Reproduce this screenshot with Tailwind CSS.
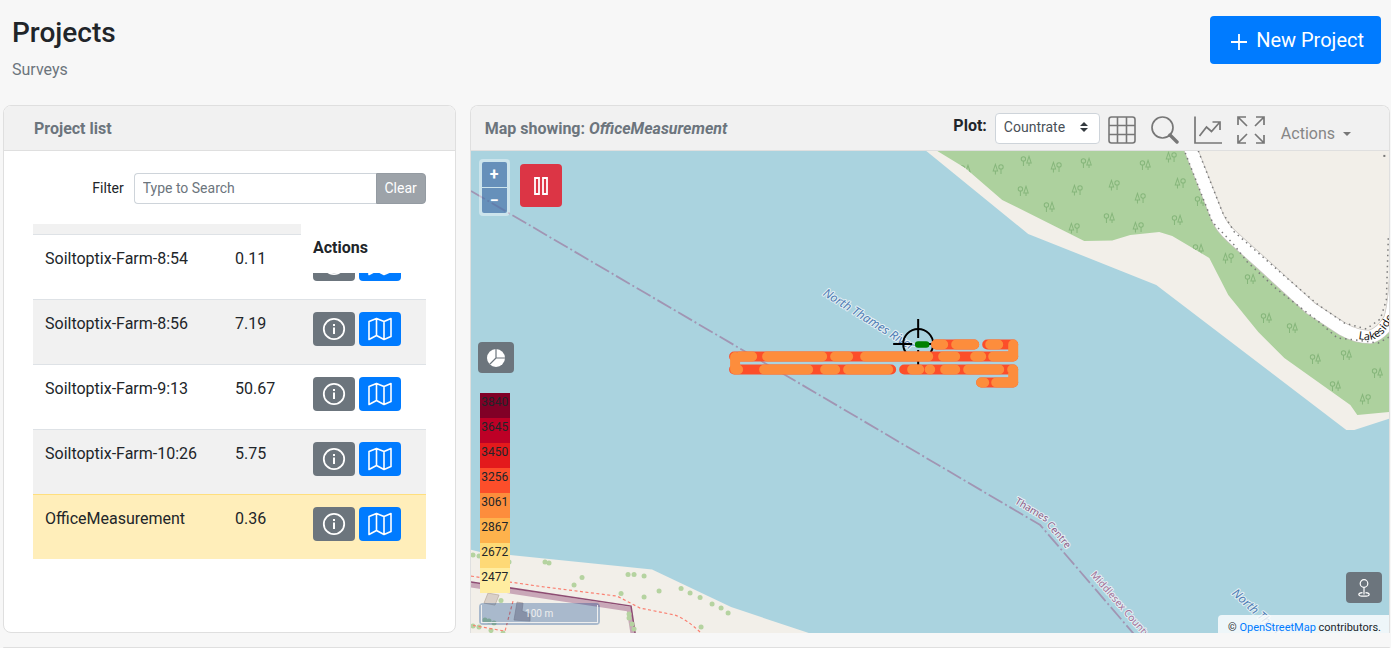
<!DOCTYPE html>
<html lang="en">
  <head>
    <meta charset="UTF-8" />
    <meta name="viewport" content="width=device-width, initial-scale=1.0" />
    <title>Projects - Surveys</title>
    <script src="https://cdn.jsdelivr.net/npm/@tailwindcss/browser@4"></script>
  </head>
  <body class="flex h-screen flex-col overflow-hidden bg-[#f7f7f7] font-['Roboto',sans-serif] text-base text-[#212529]">
    <!-- Shared icons -->
    <svg class="hidden">
      <symbol id="icon-info" viewBox="0 0 24 24">
        <circle cx="12" cy="12" r="10.2" fill="none" stroke="#fff" stroke-width="1.8" />
        <path d="M11 10.5h2V17h-2zM11 7h2v2h-2z" fill="#fff" />
      </symbol>
      <symbol id="icon-map" viewBox="0 0 24 24">
        <path d="M1 4.5 8.5 1.5 16 4.5 23 1.5V19.5L16 22.5 8.5 18.5 1 22.5zM8.5 1.5v17M16 4.5v18" fill="none" stroke="#fff" stroke-width="1.6" stroke-linejoin="round" />
      </symbol>
      <symbol id="tree-a" viewBox="-6 -6 12 12" overflow="visible">
        <path d="M-2.8-4.5-5 2h4.4zM-2.8 2v3.5M2.8 0v5" />
        <circle cx="2.8" cy="-2" r="2.2" />
      </symbol>
      <symbol id="tree-b" viewBox="-6 -6 12 12" overflow="visible">
        <path d="M2.8-4.5.6 2H5zM2.8 2v3M-2.8 0v5" />
        <circle cx="-2.8" cy="-2" r="2.2" />
      </symbol>
    </svg>

    <header class="flex items-start justify-between pt-4 pr-2.5 pl-3">
      <div>
        <h1 class="text-[28px] leading-[34px] font-medium">Projects</h1>
        <p class="mt-2 leading-6 text-[#6c757d]">Surveys</p>
      </div>
      <button class="flex h-12 items-center gap-1.5 rounded bg-[#007bff] pr-[17px] pl-4 text-xl text-white">
        <svg class="mt-1 size-6" viewBox="0 0 24 24" fill="none" stroke="currentColor" stroke-width="1.8">
          <path d="M13 4v16M5 12h16" />
        </svg>
        New Project
      </button>
    </header>

    <main class="mt-[23px] grid grid-cols-3">
      <!-- Project list -->
      <section class="pr-2 pl-[3px]">
        <div class="h-full overflow-hidden rounded-lg border border-[#dfdfdf] bg-white">
          <div class="flex h-[45px] items-center border-b border-[#dfdfdf] bg-[#f1f1f1] pt-0.5 pl-[30px]">
            <h2 class="font-bold text-[#6c757d]">Project list</h2>
          </div>
          <div class="px-[29px] pt-[22px]">
            <form class="flex items-center text-sm">
              <label for="filter" class="ml-auto pr-2.5 pb-0.5">Filter</label>
              <input id="filter" type="search" placeholder="Type to Search" class="h-[31px] w-[242px] rounded-l border border-r-0 border-[#ced4da] px-2 pb-0.5 placeholder:text-[#6c757d]" />
              <button type="button" disabled class="h-[31px] w-[50px] rounded-r border border-[#949ba2] bg-[#9da3a9] pb-0.5 text-center text-white">Clear</button>
            </form>

            <!-- column-reverse opens the list scrolled to its last row -->
            <div class="mt-5 flex h-[335px] flex-col-reverse overflow-y-auto [scrollbar-width:none]">
              <table class="w-full table-fixed border-separate border-spacing-0 text-left">
                <thead>
                  <tr class="h-[49px]">
                    <th class="w-[190px]"></th>
                    <th class="w-[78px]"></th>
                    <th class="sticky top-0 z-10 bg-white px-3 pt-3 pb-[13px] font-bold">Actions</th>
                  </tr>
                </thead>
                <tbody>
                  <tr class="h-[65px] bg-[#f1f1f1]">
                    <td></td>
                    <td></td>
                    <td></td>
                  </tr>
                  <tr class="h-[65px] align-top">
                    <td class="border-t border-[#dee2e6] px-3 pt-3">Soiltoptix-Farm-8:54</td>
                    <td class="border-t border-[#dee2e6] px-3 pt-3">0.11</td>
                    <td class="border-t border-[#dee2e6] px-3 pt-3">
                      <div class="flex gap-1">
                        <button aria-label="Info" class="flex h-[34px] w-[42px] items-center justify-center rounded bg-[#6c757d]"><svg class="size-6"><use href="#icon-info" /></svg></button>
                        <button aria-label="Show on map" class="flex h-[34px] w-[42px] items-center justify-center rounded bg-[#007bff]"><svg class="size-6"><use href="#icon-map" /></svg></button>
                      </div>
                    </td>
                  </tr>
                  <tr class="h-[65px] bg-[#f1f1f1] align-top">
                    <td class="border-t border-[#dee2e6] px-3 pt-3">Soiltoptix-Farm-8:56</td>
                    <td class="border-t border-[#dee2e6] px-3 pt-3">7.19</td>
                    <td class="border-t border-[#dee2e6] px-3 pt-3">
                      <div class="flex gap-1">
                        <button aria-label="Info" class="flex h-[34px] w-[42px] items-center justify-center rounded bg-[#6c757d]"><svg class="size-6"><use href="#icon-info" /></svg></button>
                        <button aria-label="Show on map" class="flex h-[34px] w-[42px] items-center justify-center rounded bg-[#007bff]"><svg class="size-6"><use href="#icon-map" /></svg></button>
                      </div>
                    </td>
                  </tr>
                  <tr class="h-[65px] align-top">
                    <td class="border-t border-[#dee2e6] px-3 pt-3">Soiltoptix-Farm-9:13</td>
                    <td class="border-t border-[#dee2e6] px-3 pt-3">50.67</td>
                    <td class="border-t border-[#dee2e6] px-3 pt-3">
                      <div class="flex gap-1">
                        <button aria-label="Info" class="flex h-[34px] w-[42px] items-center justify-center rounded bg-[#6c757d]"><svg class="size-6"><use href="#icon-info" /></svg></button>
                        <button aria-label="Show on map" class="flex h-[34px] w-[42px] items-center justify-center rounded bg-[#007bff]"><svg class="size-6"><use href="#icon-map" /></svg></button>
                      </div>
                    </td>
                  </tr>
                  <tr class="h-[65px] bg-[#f1f1f1] align-top">
                    <td class="border-t border-[#dee2e6] px-3 pt-3">Soiltoptix-Farm-10:26</td>
                    <td class="border-t border-[#dee2e6] px-3 pt-3">5.75</td>
                    <td class="border-t border-[#dee2e6] px-3 pt-3">
                      <div class="flex gap-1">
                        <button aria-label="Info" class="flex h-[34px] w-[42px] items-center justify-center rounded bg-[#6c757d]"><svg class="size-6"><use href="#icon-info" /></svg></button>
                        <button aria-label="Show on map" class="flex h-[34px] w-[42px] items-center justify-center rounded bg-[#007bff]"><svg class="size-6"><use href="#icon-map" /></svg></button>
                      </div>
                    </td>
                  </tr>
                  <!-- Selected project -->
                  <tr class="h-[65px] bg-[#ffeeba] align-top">
                    <td class="border-t border-[#ffdf7e] px-3 pt-3">OfficeMeasurement</td>
                    <td class="border-t border-[#ffdf7e] px-3 pt-3">0.36</td>
                    <td class="border-t border-[#ffdf7e] px-3 pt-3">
                      <div class="flex gap-1">
                        <button aria-label="Info" class="flex h-[34px] w-[42px] items-center justify-center rounded bg-[#6c757d]"><svg class="size-6"><use href="#icon-info" /></svg></button>
                        <button aria-label="Show on map" class="flex h-[34px] w-[42px] items-center justify-center rounded bg-[#007bff]"><svg class="size-6"><use href="#icon-map" /></svg></button>
                      </div>
                    </td>
                  </tr>
                </tbody>
              </table>
            </div>
          </div>
        </div>
      </section>

      <!-- Map -->
      <section class="col-span-2 pr-px pl-1.5">
        <div class="overflow-hidden rounded-t-lg border border-b-0 border-[#dfdfdf] bg-white">
          <div class="flex h-[45px] items-center justify-between border-b border-[#dfdfdf] bg-[#f1f1f1] pl-3.5">
            <h2 class="pt-0.5 font-bold text-[#6c757d]">Map showing: <em>OfficeMeasurement</em></h2>
            <div class="flex h-full items-end pr-[38px] pb-1.5 text-[#777]">
              <label for="plot" class="pr-2 leading-9 font-bold text-[#212529]">Plot:</label>
              <div class="relative mr-2">
                <select id="plot" class="block h-[31px] w-[105px] appearance-none rounded border border-[#ced4da] bg-white pb-1 pl-2 text-sm text-[#495057]">
                  <option>Countrate</option>
                </select>
                <svg class="pointer-events-none absolute top-[9px] right-3 h-2.5 w-2" viewBox="0 0 8 10" fill="#343a40">
                  <path d="M4 0 0 4h8zM4 10 0 6h8z" />
                </svg>
              </div>
              <div class="flex gap-[15px]">
                <button aria-label="Table">
                  <svg class="size-7" viewBox="0 0 28 28" fill="none" stroke="currentColor" stroke-width="1.6">
                    <rect x="1" y="1" width="26" height="26" rx="2.5" />
                    <path d="M1 9.5h26M1 18.5h26M9.5 1v26M18.5 1v26" />
                  </svg>
                </button>
                <button aria-label="Zoom to data">
                  <svg class="size-7" viewBox="0 0 28 28" fill="none" stroke="currentColor">
                    <circle cx="11.5" cy="11.5" r="10.5" stroke-width="1.7" />
                    <path d="m19 19 7 7" stroke-width="3.4" stroke-linecap="round" />
                  </svg>
                </button>
                <button aria-label="Chart">
                  <svg class="size-7" viewBox="0 0 28 28" fill="none" stroke="currentColor" stroke-width="1.7">
                    <path d="M1 .5V27h27M5.5 20l7-9 5 4.5L25.5 6.5M18.5 6H26v8" />
                  </svg>
                </button>
                <button aria-label="Full screen">
                  <svg class="size-7" viewBox="0 0 28 28" fill="none" stroke="currentColor" stroke-width="1.7">
                    <path d="M1 9V1h8M1 1l9 9M19 1h8v8M27 1l-9 9M1 19v8h8M1 27l9-9M27 19v8h-8M27 27l-9-9" />
                  </svg>
                </button>
              </div>
              <button class="ml-4 flex items-center leading-5 text-[#868686]">
                Actions
                <svg class="ml-2 h-1 w-2" viewBox="0 0 8 4" fill="#777"><path d="M0 0h8L4 4z" /></svg>
              </button>
            </div>
          </div>

          <div class="relative h-[482px]">
            <svg class="size-full" viewBox="471 151 918 482" preserveAspectRatio="xMidYMid slice">
              <defs>
                <clipPath id="wood">
                  <path d="M937 151 965 168 1002 200 1084 241 1112 240.5 1130 235 1159 232 1172 236 1209 258 1228 295 1258 332 1284 358 1350 405 1357 415 1400 411V151z" />
                </clipPath>
              </defs>
              <rect x="371" y="51" width="1200" height="700" fill="#aad3df" />

              <!-- north shore -->
              <path d="M926 151 1028 234 1156 285 1346 430H1354L1400 415V151z" fill="#f2efe9" />
              <g clip-path="url(#wood)">
                <rect x="930" y="151" width="470" height="270" fill="#add19e" />
                <g fill="none" stroke="#86b67b" stroke-width="1">
                  <use href="#tree-b" x="959" y="164" width="12" height="12" />
                  <use href="#tree-a" x="992" y="163" width="12" height="12" />
                  <use href="#tree-b" x="1020" y="155" width="12" height="12" />
                  <use href="#tree-a" x="1050" y="161" width="12" height="12" />
                  <use href="#tree-b" x="1080" y="157" width="12" height="12" />
                  <use href="#tree-b" x="1139" y="159" width="12" height="12" />
                  <use href="#tree-a" x="1165" y="151" width="12" height="12" />
                  <use href="#tree-b" x="1017" y="185" width="12" height="12" />
                  <use href="#tree-a" x="1071" y="184" width="12" height="12" />
                  <use href="#tree-a" x="1108" y="179" width="12" height="12" />
                  <use href="#tree-a" x="1134" y="192" width="12" height="12" />
                  <use href="#tree-a" x="1174" y="177" width="12" height="12" />
                  <use href="#tree-b" x="1043" y="201" width="12" height="12" />
                  <use href="#tree-a" x="1068" y="222" width="12" height="12" />
                  <use href="#tree-b" x="1103" y="212" width="12" height="12" />
                  <use href="#tree-a" x="1132" y="221" width="12" height="12" />
                  <use href="#tree-b" x="1171" y="214" width="12" height="12" />
                  <use href="#tree-b" x="1194" y="195" width="12" height="12" />
                  <use href="#tree-b" x="1192" y="243" width="12" height="12" />
                  <use href="#tree-a" x="1222" y="252" width="12" height="12" />
                  <use href="#tree-b" x="1244" y="273" width="12" height="12" />
                  <use href="#tree-b" x="1260" y="312" width="12" height="12" />
                  <use href="#tree-b" x="1286" y="322" width="12" height="12" />
                  <use href="#tree-b" x="1340" y="349" width="12" height="12" />
                  <use href="#tree-b" x="1309" y="353" width="12" height="12" />
                  <use href="#tree-b" x="1371" y="367" width="12" height="12" />
                  <use href="#tree-b" x="1329" y="380" width="12" height="12" />
                  <use href="#tree-a" x="1359" y="393" width="12" height="12" />
                </g>
              </g>
              <path d="M1191 151 1217 217 1229 235 1310 308 1342 329 1368 337 1384 328 1392 305V151z" fill="#f2efe9" />
              <g fill="none" stroke-linejoin="round">
                <path d="M1190 148 1217 217Q1221 227 1232 237L1262 264 1310 308 1342 329Q1356 337 1370 337 1382 333 1390 319 1396 300 1397 240" stroke="#c8c4bf" stroke-width="14" />
                <path d="M1190 148 1217 217Q1221 227 1232 237L1262 264 1310 308 1342 329Q1356 337 1370 337 1382 333 1390 319 1396 300 1397 240" stroke="#fff" stroke-width="12.5" />
                <path d="M1185 153 1212 222 1233 244 1247 262 1275 288 1320 323 1337 338 1355 340 1378 343 1389 337" stroke="#7b7b7b" stroke-width="1.5" stroke-dasharray="1.5 4" />
                <path d="M1198 151 1222 212 1234 232 1283 275 1318 305 1344 323 1366 329 1380 319 1386 300 1388 237" stroke="#7b7b7b" stroke-width="1.5" stroke-dasharray="1.5 4" />
              </g>
              <rect x="1383" y="155" width="2" height="2" fill="#777" />
              <text class="font-['Noto_Sans']" font-size="11" fill="#111" x="1358 1363.5 1370 1375.5 1381 1385 1387 1391" y="339 340 340 338 335 330.5 328 322" rotate="8 2 -12 -28 -42 -52 -60 -66">Lakeside</text>

              <!-- south shore -->
              <path d="M461 547 480 552 510 555 652 569.5 731 607 812 634V700H461z" fill="#f2efe9" />
              <g fill="#b5d3a0">
                <circle cx="473" cy="555" r="2.5" /><circle cx="479" cy="556" r="2.5" /><circle cx="509" cy="562" r="2.5" />
                <circle cx="545" cy="562" r="2.5" /><circle cx="549" cy="563" r="2.5" /><circle cx="582" cy="577.5" r="2.5" />
                <circle cx="574" cy="585" r="2.5" /><circle cx="628" cy="574.5" r="2.5" /><circle cx="634" cy="574.5" r="2.5" />
                <circle cx="644" cy="576" r="2.5" /><circle cx="621" cy="593.5" r="2.5" /><circle cx="644" cy="597" r="2.5" />
                <circle cx="659" cy="591" r="2.5" /><circle cx="681" cy="588.5" r="2.5" /><circle cx="690" cy="593" r="2.5" />
                <circle cx="700" cy="597.5" r="2.5" /><circle cx="712" cy="604" r="2.5" /><circle cx="721" cy="608" r="2.5" />
                <circle cx="728" cy="613" r="2.5" /><circle cx="701" cy="627" r="2.5" /><circle cx="501" cy="600.5" r="2.5" />
                <circle cx="473" cy="626" r="2.5" /><circle cx="479" cy="627" r="2.5" /><circle cx="491" cy="630.5" r="2.5" />
                <circle cx="485" cy="620" r="2.5" /><circle cx="489" cy="621" r="2.5" /><circle cx="494" cy="623" r="2.5" />
                <circle cx="503" cy="633" r="2.5" />
              </g>
              <g fill="none">
                <path d="M471 585 629 609 634 640" stroke="#c9a8b8" stroke-width="5" />
                <path d="M471 582 631 606 636 640" stroke="#8e4d73" stroke-width="1.5" />
                <path d="M471 576 510 582 545 587 617 596 640 608 675 615Q688 620 702 634M513 601 505 631 471 625" stroke="#fa8072" stroke-width="1.2" stroke-dasharray="3 2.5" />
              </g>
              <g fill="#b5d3a0">
                <circle cx="629" cy="614" r="2.5" /><circle cx="629" cy="618" r="2.5" /><circle cx="632" cy="624" r="2.5" /><circle cx="634" cy="629" r="2.5" />
              </g>
              <path d="M488 593 499 595 495 605 484 603z" fill="#d9d0c9" stroke="#b9a99c" stroke-width=".7" />
              <path d="M517 602 523 603 522 611 530 614V621L514 620z" fill="#c2b6b5" stroke="#ab9e9c" stroke-width=".7" />

              <!-- township boundary -->
              <path d="M471 191 710 331 843 409 1040 525 1138 639" fill="none" stroke="#a195b3" stroke-width="1.8" stroke-dasharray="16 3 2 3" />

              <!-- place names -->
              <g class="font-['Noto_Sans']" font-size="10" stroke="#e4eff3" stroke-width="2" paint-order="stroke" stroke-linejoin="round">
                <text font-style="italic" font-size="12" fill="#4f7db5" transform="translate(822 295) rotate(32)">North Thames River</text>
                <text fill="#8a5a86" transform="translate(1014 503) rotate(31)">Thames</text>
                <text fill="#8a5a86" transform="translate(1046 525) rotate(50)">Centre</text>
                <text fill="#a06f98" transform="translate(1090 575) rotate(49)">Middlesex County</text>
                <text font-style="italic" font-size="12" fill="#4f7db5" transform="translate(1231 594) rotate(42)">North Thames River</text>
              </g>

              <!-- current position -->
              <g fill="none" stroke="#000" stroke-width="2">
                <circle cx="918" cy="344" r="15" />
                <path d="M918 319v19M918 350v15M893 344h19M923 344h20" />
              </g>

              <!-- survey track -->
              <g fill="none" stroke-width="10" stroke-linecap="round" stroke-linejoin="round">
                <path d="M936 344.5H974M987 344.5H1013M734 356.5H1013M734 369.5H891M904 369.5H1013M981 382.5H1013" stroke="#fc4e2a" />
                <path
                  d="M936 344.5H943M956 344.5H974M990 344.5H998M1013 344.5V356.5H993
                    M740 356.5H752M767 356.5H822M835 356.5H848M865 356.5H928M943 356.5H955M975 356.5H981
                    M735 357V369.5H738M764 369.5H808M825 369.5H835M848 369.5H888
                    M912 369.5H919M929.5 369.5H930M945 369.5H955M968 369.5H999M1012 369.5H1013V382.5H996M981 382.5H984"
                  stroke="#fd8d3c"
                />
                <path d="M918 344.5H926" stroke="#008000" stroke-width="6.5" />
              </g>
            </svg>

            <!-- zoom control -->
            <div class="absolute top-2 left-2 flex flex-col gap-px rounded bg-white/40 p-[3px] text-base leading-6 font-bold text-white">
              <button class="h-[25px] w-[25px] rounded-t-xs bg-[#003c88]/50">+</button>
              <button class="h-[25px] w-[25px] rounded-b-xs bg-[#003c88]/50">−</button>
            </div>
            <button aria-label="Pause" class="absolute top-[13px] left-[49px] flex h-[43px] w-[42px] items-center justify-center rounded bg-[#dc3545]">
              <svg class="h-[18px] w-3.5" viewBox="0 0 14 18" fill="none" stroke="#fff" stroke-width="1.8">
                <path d="M1 1h4v16H1zM9 1h4v16H9z" />
              </svg>
            </button>

            <!-- legend -->
            <button aria-label="Statistics" class="absolute top-[191px] left-[7px] flex h-[31px] w-9 items-center justify-center rounded bg-[#6c757d]">
              <svg class="size-[18px]" viewBox="0 0 18 18">
                <circle cx="9" cy="9" r="9" fill="#fff" />
                <path d="M9 0v9h9M9 9l-6.5 6.5" fill="none" stroke="#6c757d" stroke-width="1.2" />
              </svg>
            </button>
            <ul class="absolute top-[242px] left-[9px] w-[30px] text-center text-xs leading-[18px]">
              <li class="h-[25px] bg-[#800026]">3840</li>
              <li class="h-[25px] bg-[#bd0026]">3645</li>
              <li class="h-[25px] bg-[#e31a1c]">3450</li>
              <li class="h-[25px] bg-[#fc4e2a]">3256</li>
              <li class="h-[25px] bg-[#fd8d3c]">3061</li>
              <li class="h-[25px] bg-[#feb24c]">2867</li>
              <li class="h-[25px] bg-[#fed976]">2672</li>
              <li class="h-[25px] bg-[#ffeda0]">2477</li>
            </ul>

            <!-- scale line -->
            <div class="absolute bottom-2 left-2 rounded bg-[#003c88]/30 p-0.5">
              <div class="h-[18px] w-[117px] border border-t-0 border-[#eee] text-center text-[10px] leading-[18px] text-[#eee]">100 m</div>
            </div>

            <button aria-label="Drop pin" class="absolute right-[7px] bottom-[30px] flex h-[31px] w-9 items-center justify-center rounded bg-[#6c757d]">
              <svg class="h-[18px] w-3" viewBox="0 0 12 18" fill="none" stroke="#fff" stroke-width="1.2">
                <circle cx="6" cy="4.5" r="3.8" />
                <path d="M6 8.5v7M4.500 13.7C2.5 13.9.8 14.5.8 15.4c0 1 2.3 1.8 5.2 1.8s5.2-.8 5.2-1.8c0-.9-1.7-1.5-3.7-1.7" />
              </svg>
            </button>
            <p class="absolute right-0 bottom-0 rounded-tl bg-white/80 pt-2 pr-2 pl-2.5 text-[11px] leading-[10px] text-[#212529]">
              © <a href="https://www.openstreetmap.org/copyright" class="text-[#007bff]">OpenStreetMap</a> contributors.
            </p>
          </div>
        </div>
      </section>
    </main>

    <section class="mt-3.5 mr-px ml-[3px] min-h-0 flex-1 rounded-t-lg border-t border-[#dfdfdf] bg-[#f1f1f1]"></section>
  </body>
</html>
